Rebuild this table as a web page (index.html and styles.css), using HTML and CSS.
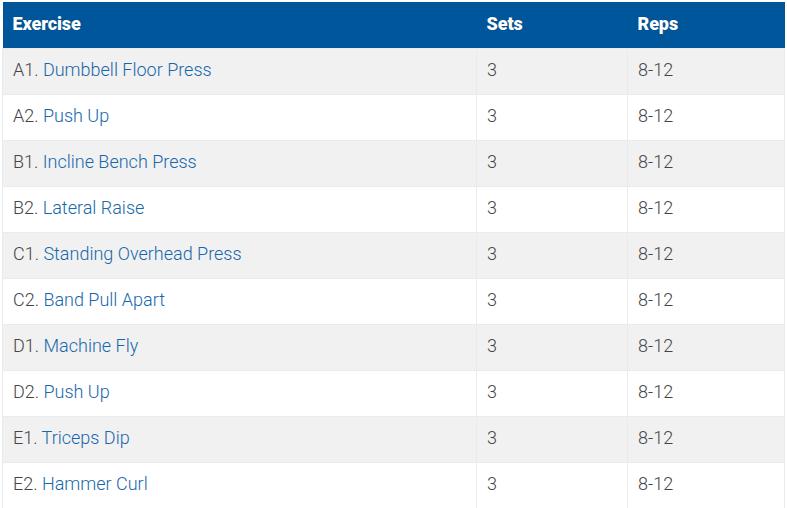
FILE: index.html
```html
<!DOCTYPE html>
<html>
<head>
<meta charset="utf-8">
<link rel="stylesheet" href="styles.css">
</head>
<body>
<table class="workout">
  <thead>
    <tr><th class="col-ex">Exercise</th><th class="col-sets">Sets</th><th class="col-reps">Reps</th></tr>
  </thead>
  <tbody>
    <tr><td>A1. <a href="#">Dumbbell Floor Press</a></td><td>3</td><td>8-12</td></tr>
    <tr><td>A2. <a href="#">Push Up</a></td><td>3</td><td>8-12</td></tr>
    <tr><td>B1. <a href="#">Incline Bench Press</a></td><td>3</td><td>8-12</td></tr>
    <tr><td>B2. <a href="#">Lateral Raise</a></td><td>3</td><td>8-12</td></tr>
    <tr><td>C1. <a href="#">Standing Overhead Press</a></td><td>3</td><td>8-12</td></tr>
    <tr><td>C2. <a href="#">Band Pull Apart</a></td><td>3</td><td>8-12</td></tr>
    <tr><td>D1. <a href="#">Machine Fly</a></td><td>3</td><td>8-12</td></tr>
    <tr><td>D2. <a href="#">Push Up</a></td><td>3</td><td>8-12</td></tr>
    <tr><td>E1. <a href="#">Triceps Dip</a></td><td>3</td><td>8-12</td></tr>
    <tr><td>E2. <a href="#">Hammer Curl</a></td><td>3</td><td>8-12</td></tr>
  </tbody>
</table>
</body>
</html>
```
FILE: styles.css
```css
html, body { margin: 0; padding: 0; background: #fff; }
body { padding: 2px; font-family: Roboto, "Liberation Sans", sans-serif; }
.workout {
  width: 783px;
  border-collapse: collapse;
  table-layout: fixed;
  font-size: 18px;
  color: #444;
}
.col-ex { width: 474px; }
.col-sets { width: 151px; }
.workout th {
  background: #00569a;
  color: #fff;
  font-weight: 900;
  font-size: 18px;
  text-align: left;
  height: 46px;
  padding: 11px 10px 0;
  box-sizing: border-box;
  letter-spacing: -0.1px;
  text-shadow: 0 0 1px rgba(0,0,0,0.3);
  vertical-align: top;
}
.workout td {
  height: 46px;
  box-sizing: border-box;
  padding: 0 10px 4px;
  border: 1px solid #ebebeb;
  font-weight: 300;
  vertical-align: middle;
}
.workout tbody tr:nth-child(odd) td { background: #f1f1f1; }
.workout a { color: #1667ab; text-decoration: none; }
```
